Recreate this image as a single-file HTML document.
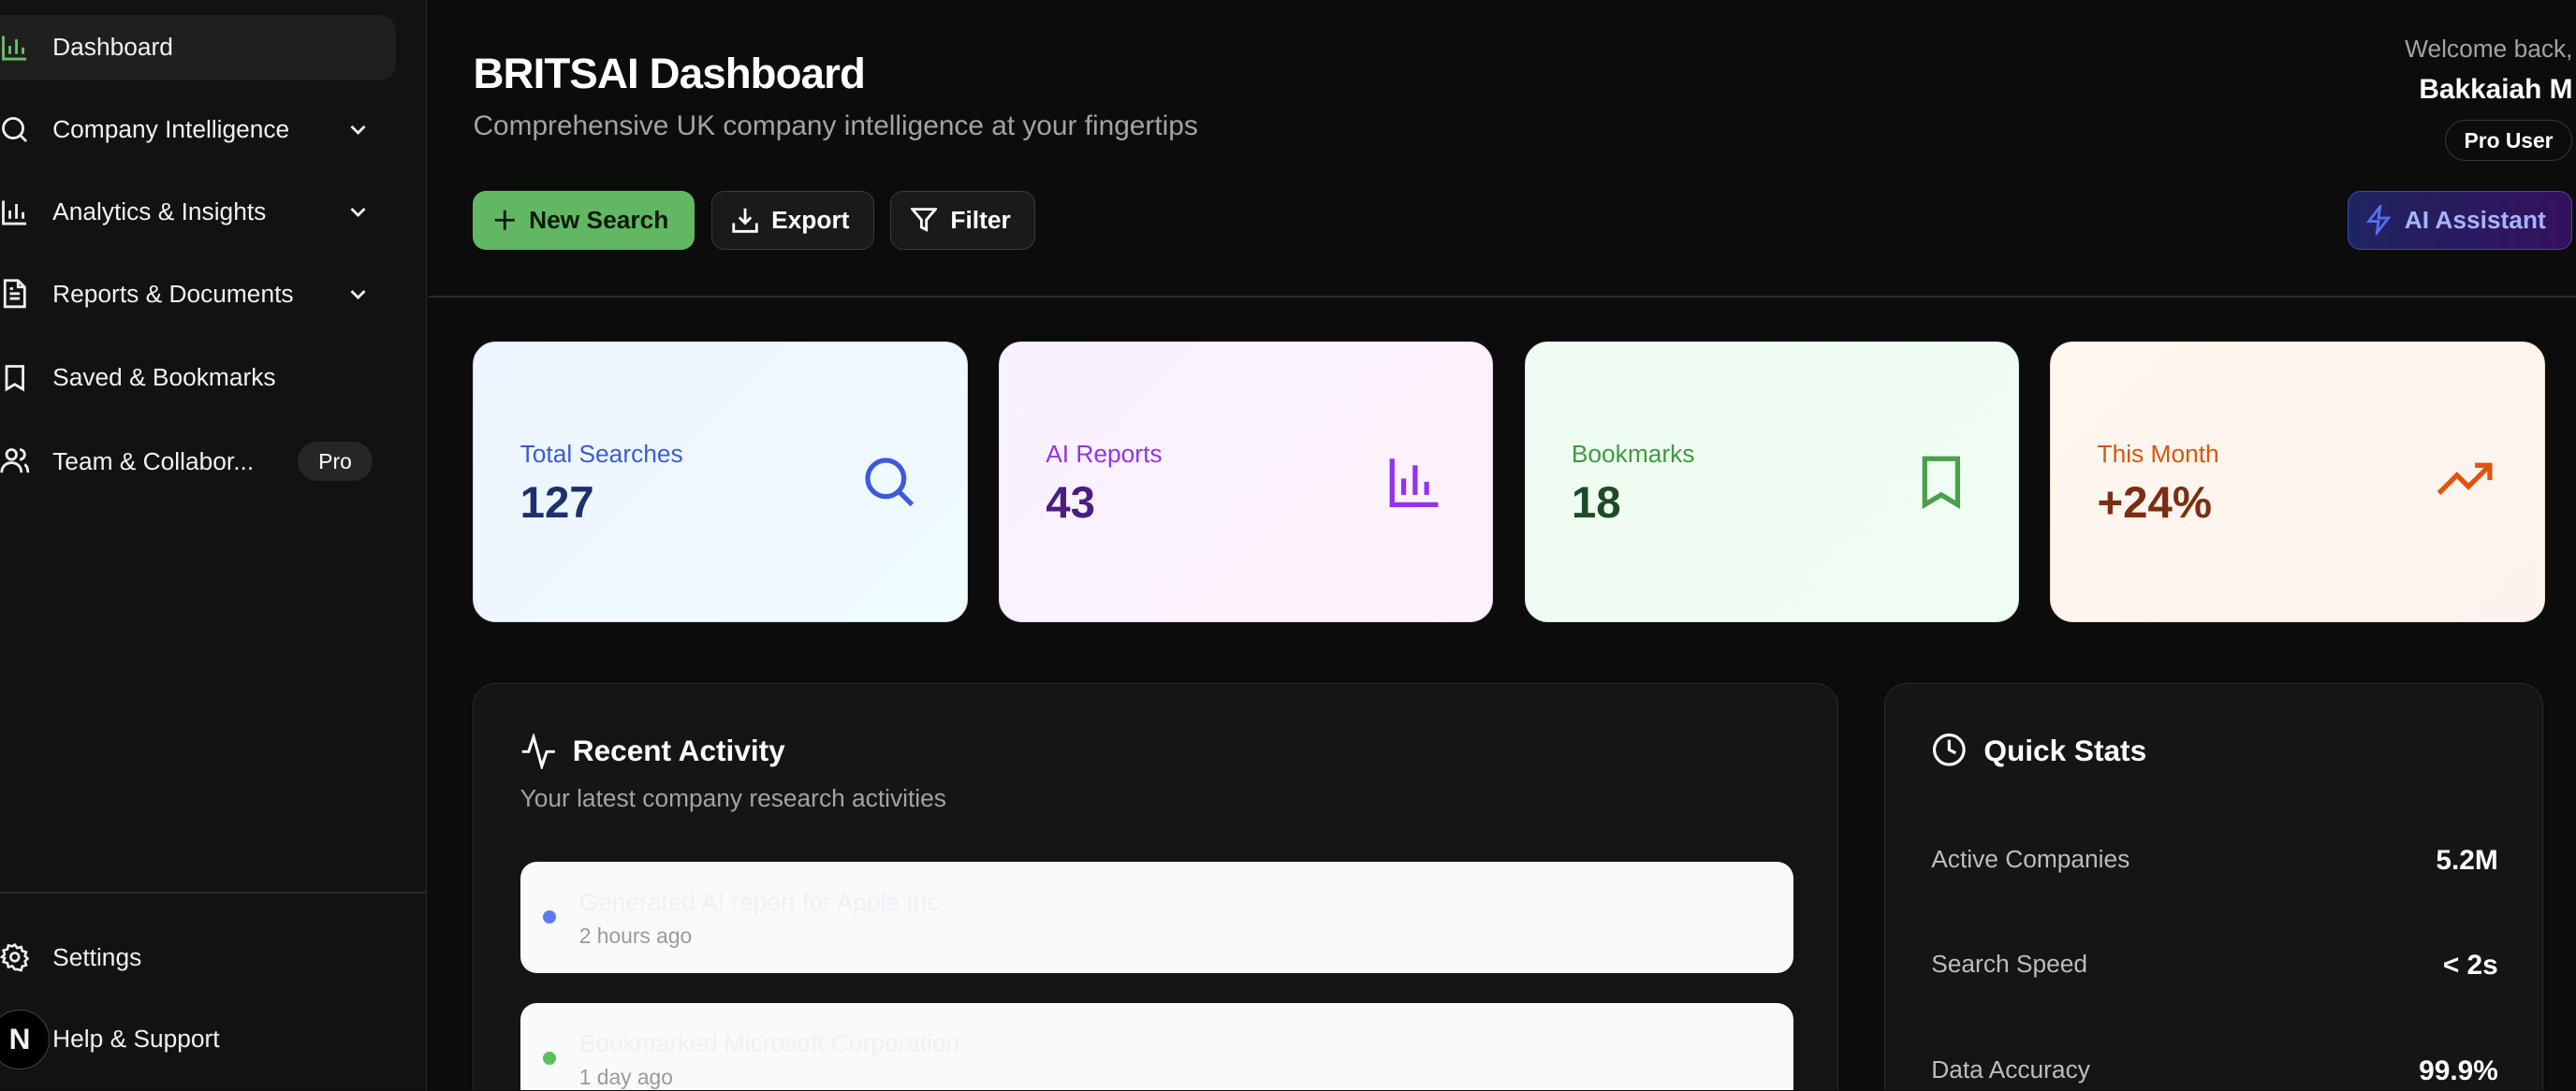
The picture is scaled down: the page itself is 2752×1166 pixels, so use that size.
<!DOCTYPE html>
<html><head><meta charset="utf-8">
<style>
*{box-sizing:border-box;margin:0;padding:0}
html,body{width:2752px;height:1166px;overflow:hidden;background:#0c0c0c}
#w{zoom:1.7551;width:1568px;height:664px;position:relative;font-family:"Liberation Sans",sans-serif;color:#fff;background:#0c0c0c;overflow:hidden}
.sb{position:absolute;left:0;top:0;width:260px;height:664px;background:#121212;border-right:1px solid #2a2a2a}
.ni{position:absolute;left:0;width:241px;height:40px;display:flex;align-items:center;font-size:15px;color:#f2f2f2;white-space:nowrap}
.ni svg{position:absolute;left:0}
.ni span{position:absolute;left:32px}
.act{background:#1f1f1f;border-radius:0 10px 10px 0}
.pro{position:absolute;left:181px;top:269px;width:46px;height:24px;border-radius:12px;background:#262626;font-size:13px;display:flex;align-items:center;justify-content:center}
.h1{position:absolute;left:288px;top:30px;font-size:26px;font-weight:bold;letter-spacing:-0.5px}
.sub{position:absolute;left:288px;top:67px;font-size:17px;color:#a3a3a3}
.btn{position:absolute;top:116px;height:36px;border-radius:8px;display:flex;align-items:center;font-size:15px;font-weight:bold;padding:0 12px;gap:8px;white-space:nowrap}
.card{position:absolute;top:208px;width:301px;height:171px;border-radius:14px;border:1px solid #cfd8e0}
.card .l{position:absolute;left:28px;top:59px;font-size:15px}
.card .v{position:absolute;left:28px;top:82px;font-size:27px;font-weight:bold}
.card svg{position:absolute;right:30px;top:68px}
.panel{position:absolute;top:416px;height:248px;background:#151515;border:1px solid #2c2c2c;border-bottom:none;border-radius:14px 14px 0 0;overflow:hidden}
.row{position:absolute;left:28px;width:775px;height:68px;background:#f8fafc;border-radius:10px}
.dot{position:absolute;left:14px;top:30px;width:8px;height:8px;border-radius:50%}
.qs{position:absolute;left:28px;width:345px;display:flex;justify-content:space-between;font-size:15px;color:#bdbdbd}
.qs b{color:#fff;font-size:17px}
</style></head><body><div id="w">
<div class="sb">
 <div class="ni act" style="top:9px"><svg width="18" height="18" viewBox="0 0 18 18" fill="none" stroke="#6cc26c" stroke-width="1.6"><path d="M2 2v14h14M6 13V8M10 13V4M14 13V9"/></svg><span>Dashboard</span></div>
 <div class="ni" style="top:59px"><svg width="18" height="18" viewBox="0 0 18 18" fill="none" stroke="#eee" stroke-width="1.6"><circle cx="8" cy="8" r="6"/><path d="M12.5 12.5L16 16"/></svg><span>Company Intelligence</span><svg width="12" height="12" viewBox="0 0 12 12" fill="none" stroke="#eee" stroke-width="1.6" style="left:212px"><path d="M2 4l4 4 4-4"/></svg></div>
 <div class="ni" style="top:109px"><svg width="18" height="18" viewBox="0 0 18 18" fill="none" stroke="#eee" stroke-width="1.6"><path d="M2 2v14h14M6 13V8M10 13V4M14 13V9"/></svg><span>Analytics &amp; Insights</span><svg width="12" height="12" viewBox="0 0 12 12" fill="none" stroke="#eee" stroke-width="1.6" style="left:212px"><path d="M2 4l4 4 4-4"/></svg></div>
 <div class="ni" style="top:159px"><svg width="18" height="18" viewBox="0 0 18 18" fill="none" stroke="#eee" stroke-width="1.6"><path d="M3 1h8l4 4v12H3zM11 1v4h4M6 9h6M6 12h6M6 6h2"/></svg><span>Reports &amp; Documents</span><svg width="12" height="12" viewBox="0 0 12 12" fill="none" stroke="#eee" stroke-width="1.6" style="left:212px"><path d="M2 4l4 4 4-4"/></svg></div>
 <div class="ni" style="top:210px"><svg width="18" height="18" viewBox="0 0 18 18" fill="none" stroke="#eee" stroke-width="1.6"><path d="M4 2h10v14l-5-3-5 3z"/></svg><span>Saved &amp; Bookmarks</span></div>
 <div class="ni" style="top:261px"><svg width="18" height="18" viewBox="0 0 18 18" fill="none" stroke="#eee" stroke-width="1.6"><circle cx="7" cy="5" r="3"/><path d="M1 16c0-4 3-6 6-6s6 2 6 6M12 2a3 3 0 010 6M15 11c1.5 1 2 3 2 5"/></svg><span>Team &amp; Collabor...</span></div>
 <div class="pro">Pro</div>
 <div style="position:absolute;left:0;top:543px;width:260px;height:1px;background:#2a2a2a"></div>
 <div class="ni" style="top:563px"><svg width="18" height="18" viewBox="0 0 18 18" fill="none" stroke="#eee" stroke-width="1.5"><circle cx="9" cy="9" r="2.5"/><path d="M9 1.5l1.5 2 2.4-.6.6 2.4 2.4.7-.7 2.4 1.6 1.6-1.6 1.6.7 2.4-2.4.7-.6 2.4-2.4-.6L9 16.5l-1.5-2-2.4.6-.6-2.4-2.4-.7.7-2.4L1.2 9l1.6-1.6-.7-2.4 2.4-.7.6-2.4 2.4.6z"/></svg><span>Settings</span></div>
 <div class="ni" style="top:613px"><div style="position:absolute;left:-6px;top:2px;width:36px;height:36px;border-radius:50%;background:#000;border:1px solid #444;display:flex;align-items:center;justify-content:center;font-size:18px;font-weight:bold">N</div><span>Help &amp; Support</span></div>
</div>
<div style="position:absolute;left:261px;top:180px;width:1307px;height:1px;background:#2a2a2a"></div>
<div class="h1">BRITSAI Dashboard</div>
<div class="sub">Comprehensive UK company intelligence at your fingertips</div>
<div class="btn" style="left:288px;width:135px;background:#62b862;color:#0a1a0a"><svg width="14" height="14" viewBox="0 0 14 14" stroke="#0a1a0a" stroke-width="1.6"><path d="M7 1v12M1 7h12"/></svg>New Search</div>
<div class="btn" style="left:433px;width:99px;background:#1a1a1a;border:1px solid #3a3a3a"><svg width="16" height="16" viewBox="0 0 16 16" fill="none" stroke="#fff" stroke-width="1.6"><path d="M8 1v9M4.5 6.5L8 10l3.5-3.5M1 10v5h14v-5"/></svg>Export</div>
<div class="btn" style="left:542px;width:88px;background:#1a1a1a;border:1px solid #3a3a3a"><svg width="16" height="16" viewBox="0 0 16 16" fill="none" stroke="#fff" stroke-width="1.6"><path d="M1 1.5h14L9.5 8v6l-3-1.5V8z"/></svg>Filter</div>
<div style="position:absolute;right:2px;top:21px;font-size:15px;color:#a3a3a3">Welcome back,</div>
<div style="position:absolute;right:2px;top:45px;font-size:17px;font-weight:bold">Bakkaiah M</div>
<div style="position:absolute;left:1488px;top:73px;width:78px;height:25px;border:1px solid #3a3a3a;border-radius:13px;font-size:13px;font-weight:bold;display:flex;align-items:center;justify-content:center">Pro User</div>
<div class="btn" style="left:1429px;width:137px;background:linear-gradient(90deg,#1e2560,#35105e);border:1px solid #3b4ab8;color:#a5b4fc;gap:8px;padding:0 10px"><svg width="16" height="18" viewBox="0 0 16 18" fill="none" stroke="#5b6ef0" stroke-width="1.6"><path d="M9 1L2 10h6l-1 7 7-9H8z"/></svg>AI Assistant</div>

<div class="card" style="left:288px;background:linear-gradient(135deg,#eef4ff,#eefcff)"><div class="l" style="color:#3b5bd6">Total Searches</div><div class="v" style="color:#1e2f6e">127</div><svg width="34" height="34" viewBox="0 0 34 34" fill="none" stroke="#3b5bdb" stroke-width="3"><circle cx="15" cy="15" r="11"/><path d="M23 23l8 8"/></svg></div>
<div class="card" style="left:608px;background:linear-gradient(135deg,#f8f2ff,#fdf2fb);border-color:#e2d8ef"><div class="l" style="color:#9333ea">AI Reports</div><div class="v" style="color:#4c1d80">43</div><svg width="34" height="34" viewBox="0 0 34 34" fill="none" stroke="#9333ea" stroke-width="3"><path d="M3 3v28h28M10 25V15M17 25V7M24 25V17"/></svg></div>
<div class="card" style="left:928px;background:linear-gradient(135deg,#effcf1,#f0fdf4);border-color:#d0ead6"><div class="l" style="color:#3e9a3e">Bookmarks</div><div class="v" style="color:#1f4a26">18</div><svg width="34" height="34" viewBox="0 0 34 34" fill="none" stroke="#4a9f4a" stroke-width="3"><path d="M7 3h20v28l-10-6-10 6z"/></svg></div>
<div class="card" style="left:1248px;background:linear-gradient(135deg,#fff6ee,#fdf3ee);border-color:#efdccc"><div class="l" style="color:#d9560a">This Month</div><div class="v" style="color:#7a2e12">+24%</div><svg width="36" height="34" viewBox="0 0 36 34" fill="none" stroke="#e0540e" stroke-width="3"><path d="M2 24l11-11 7 7 13-13M24 7h9v9"/></svg></div>

<div class="panel" style="left:288px;width:831px">
 <svg style="position:absolute;left:28px;top:30px" width="22" height="22" viewBox="0 0 22 22" fill="none" stroke="#fff" stroke-width="1.7"><path d="M1 11h4l3-9 5 18 3-9h5"/></svg>
 <div style="position:absolute;left:60px;top:30px;font-size:18px;font-weight:bold">Recent Activity</div>
 <div style="position:absolute;left:28px;top:61px;font-size:15px;color:#a3a3a3">Your latest company research activities</div>
 <div class="row" style="top:108px"><div class="dot" style="background:#5b7cf0"></div><div style="position:absolute;left:36px;top:16px;font-size:15px;color:#eef1f4">Generated AI report for Apple Inc</div><div style="position:absolute;left:36px;top:38px;font-size:13px;color:#9a9a9a">2 hours ago</div></div>
 <div class="row" style="top:194px"><div class="dot" style="background:#5cbf5c"></div><div style="position:absolute;left:36px;top:16px;font-size:15px;color:#eef1f4">Bookmarked Microsoft Corporation</div><div style="position:absolute;left:36px;top:38px;font-size:13px;color:#9a9a9a">1 day ago</div></div>
</div>
<div class="panel" style="left:1147px;width:401px">
 <svg style="position:absolute;left:28px;top:29px" width="22" height="22" viewBox="0 0 22 22" fill="none" stroke="#fff" stroke-width="1.8"><circle cx="11" cy="11" r="9"/><path d="M11 5v6l4 2"/></svg>
 <div style="position:absolute;left:60px;top:30px;font-size:18px;font-weight:bold">Quick Stats</div>
 <div class="qs" style="top:98px"><span>Active Companies</span><b>5.2M</b></div>
 <div class="qs" style="top:162px"><span>Search Speed</span><b>&lt; 2s</b></div>
 <div class="qs" style="top:226px"><span>Data Accuracy</span><b>99.9%</b></div>
</div>
</div></body></html>
